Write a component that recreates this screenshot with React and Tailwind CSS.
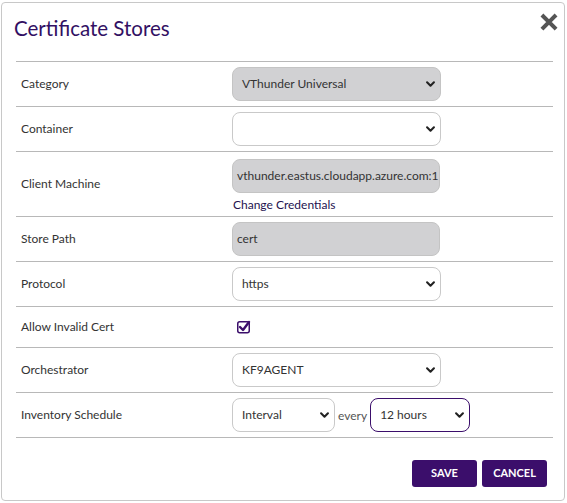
import React from 'react'

const Chevron = () => (
  <svg className="pointer-events-none absolute right-[5px] top-1/2 -translate-y-1/2 w-[11px] h-[11px] text-[#222]" viewBox="0 0 16 16" fill="none" stroke="currentColor" strokeWidth={3} strokeLinecap="round" strokeLinejoin="round">
    <path d="M3 5.5l5 5 5-5" />
  </svg>
)

function Select({ value, disabled, w = 'w-[209px]', active }) {
  return (
    <div className={`relative ${w} h-[34px]`}>
      <div
        className={`h-full w-full rounded-lg border px-[9px] flex items-center text-[12px] text-[#333] ${
          disabled ? 'bg-[#d1d1d3] border-[#c4c4c4]' : 'bg-white'
        } ${active ? 'border-[#3b0e6b] border-[1.5px]' : disabled ? '' : 'border-[#c9c9c9]'}`}
      >
        {value}
      </div>
      <Chevron />
    </div>
  )
}

function Row({ label, h = 'h-[45px]', children }) {
  return (
    <div className={`flex items-center ${h} border-b border-[#b8b8b8]`}>
      <div className="w-[216px] pl-[5px] text-[12px] text-[#333]">{label}</div>
      <div className="flex-1">{children}</div>
    </div>
  )
}

export default function App() {
  return (
    <div className="w-[567px] h-[503px] bg-white pt-[2px] pl-[1px]" style={{ fontFamily: 'Lato, "Open Sans", sans-serif' }}>
      <div className="w-[564px] h-[499px] border border-[#c8c8c8] rounded-[4px] bg-white relative px-[14px]">
        <div className="flex items-start justify-between h-[58px]">
          <h1 className="text-[20.5px] leading-none mt-[15px] -ml-[2px] text-[#321063]">Certificate Stores</h1>
          <svg className="mt-[10px] -mr-[8px] w-[18px] h-[18px] text-[#555]" viewBox="0 0 16 16" fill="none" stroke="currentColor" strokeWidth={3.6} strokeLinecap="square">
            <path d="M3 3l10 10M13 3L3 13" />
          </svg>
        </div>
        <div className="border-t border-[#b8b8b8] mr-[-3px]">
          <Row label="Category">
            <Select value="VThunder Universal" disabled />
          </Row>
          <Row label="Container">
            <Select value="" />
          </Row>
          <Row label="Client Machine" h="h-[65px]">
            <div className="flex flex-col pt-[5px]">
              <div className="w-[208px] h-[34px] rounded-lg bg-[#d1d1d3] border border-[#c4c4c4] pl-[4px] flex items-center text-[12px] text-[#333] overflow-hidden whitespace-nowrap">
                vthunder.eastus.cloudapp.azure.com:1
              </div>
              <span className="mt-[3px] ml-[1px] text-[12px] text-[#24124f]">Change Credentials</span>
            </div>
          </Row>
          <Row label="Store Path">
            <div className="w-[208px] h-[34px] rounded-lg bg-[#d1d1d3] border border-[#c4c4c4] pl-[4px] flex items-center text-[12px] text-[#333]">
              cert
            </div>
          </Row>
          <Row label="Protocol">
            <Select value="https" />
          </Row>
          <Row label="Allow Invalid Cert" h="h-[41px]">
            <svg className="ml-[5px] w-[14px] h-[14px]" viewBox="0 0 14 14" fill="none">
              <rect x="0.75" y="1.75" width="11.5" height="11" rx="2" stroke="#3b0e6b" strokeWidth="1.5" />
              <path d="M3 7l3 3 6-8" stroke="#3b0e6b" strokeWidth="2.4" strokeLinecap="round" strokeLinejoin="round" />
            </svg>
          </Row>
          <Row label="Orchestrator">
            <Select value="KF9AGENT" />
          </Row>
          <Row label="Inventory Schedule">
            <div className="flex items-end">
              <Select value="Interval" w="w-[103px]" />
              <span className="mx-[3px] mb-[7px] text-[12px] text-[#555]">every</span>
              <Select value="12 hours" w="w-[100px]" active />
            </div>
          </Row>
        </div>
        <div className="flex justify-end gap-[5px] mt-[22px] mr-[3px]">
          <button className="w-[65px] h-[27px] rounded-[3px] bg-[#3b0e6b] text-white text-[11px] font-bold">SAVE</button>
          <button className="w-[65px] h-[27px] rounded-[3px] bg-[#3b0e6b] text-white text-[11px] font-bold">CANCEL</button>
        </div>
      </div>
    </div>
  )
}
